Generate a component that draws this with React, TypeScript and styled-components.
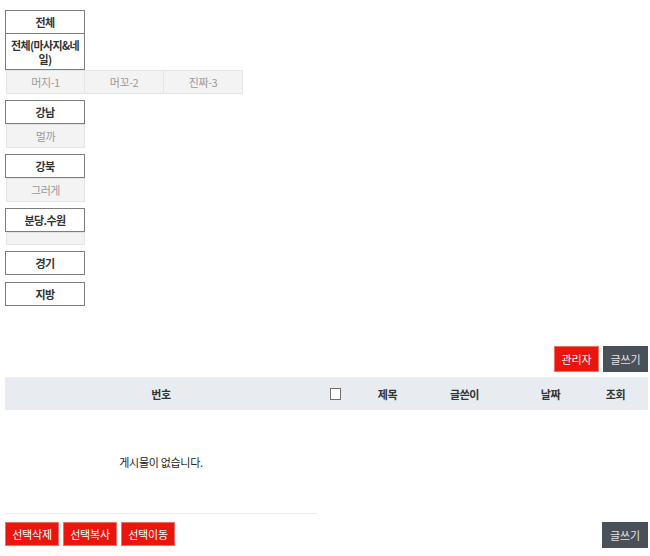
import React from "react";
import styled, { createGlobalStyle } from "styled-components";

const Global = createGlobalStyle`
  html, body { margin: 0; padding: 0; background: #ffffff; }
  body { font-family: "Noto Sans CJK KR", "Noto Sans", sans-serif; font-size: 11px; color: #333; }
  * { box-sizing: border-box; }
`;

const Page = styled.div`
  width: 650px;
  padding: 10px 2px 0 5px;
`;

const Menu = styled.div`
  display: flex;
  flex-direction: column;
  gap: 6px;
  align-items: flex-start;
`;

const Group = styled.div<{ $extra?: number }>`
  display: flex;
  flex-direction: column;
  align-items: flex-start;
  margin-top: ${(p) => p.$extra ?? 0}px;
`;

const MainBox = styled.div<{ $joined?: boolean; $multi?: boolean }>`
  width: 80px;
  border: 1px solid #7d7d7d;
  border-top-width: ${(p) => (p.$joined ? "0" : "1px")};
  background: #fff;
  color: #333;
  font-weight: 700;
  font-size: 11px;
  letter-spacing: -0.6px;
  text-align: center;
  word-break: break-all;
  line-height: ${(p) => (p.$multi ? "14px" : "22px")};
  padding: ${(p) => (p.$multi ? "4px 1px 3px" : "0 1px")};
`;

const SubRow = styled.div`
  display: flex;
  margin-left: 1px;
`;

const SubItem = styled.div<{ $empty?: boolean }>`
  width: 79px;
  height: ${(p) => (p.$empty ? "13px" : "24px")};
  line-height: 22px;
  border: 1px solid #e4e4e4;
  border-left-width: 0;
  &:first-child { border-left-width: 1px; }
  background: #f3f3f3;
  color: #9a9a9a;
  font-size: 11px;
  letter-spacing: -0.4px;
  text-align: center;
`;

const Board = styled.div`
  margin-top: 40px;
  width: 643px;
`;

const TopBar = styled.div`
  display: flex;
  justify-content: flex-end;
  gap: 4px;
`;

const Btn = styled.button<{ $tone: "red" | "dark"; $h?: number; $w?: number }>`
  width: ${(p) => p.$w ?? 45}px;
  height: ${(p) => p.$h ?? 26}px;
  padding: 0;
  border: 1px solid ${(p) => (p.$tone === "red" ? "#f06d66" : "#4a5058")};
  background: ${(p) => (p.$tone === "red" ? "#e8160d" : "#4a5058")};
  color: ${(p) => (p.$tone === "red" ? "#ffffff" : "#e2e4e6")};
  font-family: "Noto Sans CJK KR", sans-serif;
  font-size: 11px;
  line-height: 1;
  letter-spacing: -0.2px;
  cursor: pointer;
`;

const Cols = "312px 47px 47px 107px 65px 65px";

const HeadRow = styled.div`
  margin-top: 5px;
  display: grid;
  grid-template-columns: ${Cols};
  height: 33px;
  background: #e8ecf0;
  border-top: 1px solid #edf0f3;
  align-items: center;
`;

const HeadCell = styled.div<{ $align?: "left" | "center" }>`
  padding-left: ${(p) => (p.$align === "left" ? "13px" : "0")};
  font-weight: 700;
  font-size: 11px;
  color: #333;
  letter-spacing: -0.4px;
  display: flex;
  justify-content: ${(p) => (p.$align === "left" ? "flex-start" : "center")};
  align-items: center;
`;

const Check = styled.input`
  appearance: none;
  margin: 0;
  width: 11px;
  height: 12px;
  border: 1px solid #6f6f6f;
  background: #fff;
`;

const BodyRow = styled.div`
  display: grid;
  grid-template-columns: ${Cols};
`;

const EmptyCell = styled.div`
  height: 104px;
  border-bottom: 1px solid #ece9f2;
  display: flex;
  align-items: center;
  justify-content: center;
  font-size: 11px;
  color: #222;
  letter-spacing: -0.3px;
`;

const BottomBar = styled.div`
  margin-top: 8px;
  display: flex;
  justify-content: space-between;
  align-items: flex-start;
`;

const BtnGroup = styled.div`
  display: flex;
  gap: 4px;
`;

export default function App() {
  const groups: { main: string; subs?: string[]; empty?: boolean; extra?: number }[] = [
    { main: "강남", subs: ["멀까"] },
    { main: "강북", subs: ["그러게"] },
    { main: "분당.수원", empty: true },
    { main: "경기" },
    { main: "지방", extra: 1 },
  ];
  return (
    <>
      <Global />
      <Page>
        <Menu>
          <Group>
            <MainBox>전체</MainBox>
            <MainBox $joined $multi>전체(마사지&네일)</MainBox>
            <SubRow>
              <SubItem>머지-1</SubItem>
              <SubItem>머꼬-2</SubItem>
              <SubItem>진짜-3</SubItem>
            </SubRow>
          </Group>
          {groups.map((g) => (
            <Group key={g.main} $extra={g.extra}>
              <MainBox>{g.main}</MainBox>
              {g.subs && (
                <SubRow>
                  {g.subs.map((s) => (
                    <SubItem key={s}>{s}</SubItem>
                  ))}
                </SubRow>
              )}
              {g.empty && (
                <SubRow>
                  <SubItem $empty />
                </SubRow>
              )}
            </Group>
          ))}
        </Menu>

        <Board>
          <TopBar>
            <Btn $tone="red">관리자</Btn>
            <Btn $tone="dark">글쓰기</Btn>
          </TopBar>
          <HeadRow>
            <HeadCell>번호</HeadCell>
            <HeadCell $align="left">
              <Check type="checkbox" aria-label="전체선택" />
            </HeadCell>
            <HeadCell>제목</HeadCell>
            <HeadCell>글쓴이</HeadCell>
            <HeadCell>날짜</HeadCell>
            <HeadCell>조회</HeadCell>
          </HeadRow>
          <BodyRow>
            <EmptyCell>게시물이 없습니다.</EmptyCell>
          </BodyRow>
          <BottomBar>
            <BtnGroup>
              <Btn $tone="red" $w={54} $h={24}>선택삭제</Btn>
              <Btn $tone="red" $w={54} $h={24}>선택복사</Btn>
              <Btn $tone="red" $w={54} $h={24}>선택이동</Btn>
            </BtnGroup>
            <Btn $tone="dark" $w={46}>글쓰기</Btn>
          </BottomBar>
        </Board>
      </Page>
    </>
  );
}
